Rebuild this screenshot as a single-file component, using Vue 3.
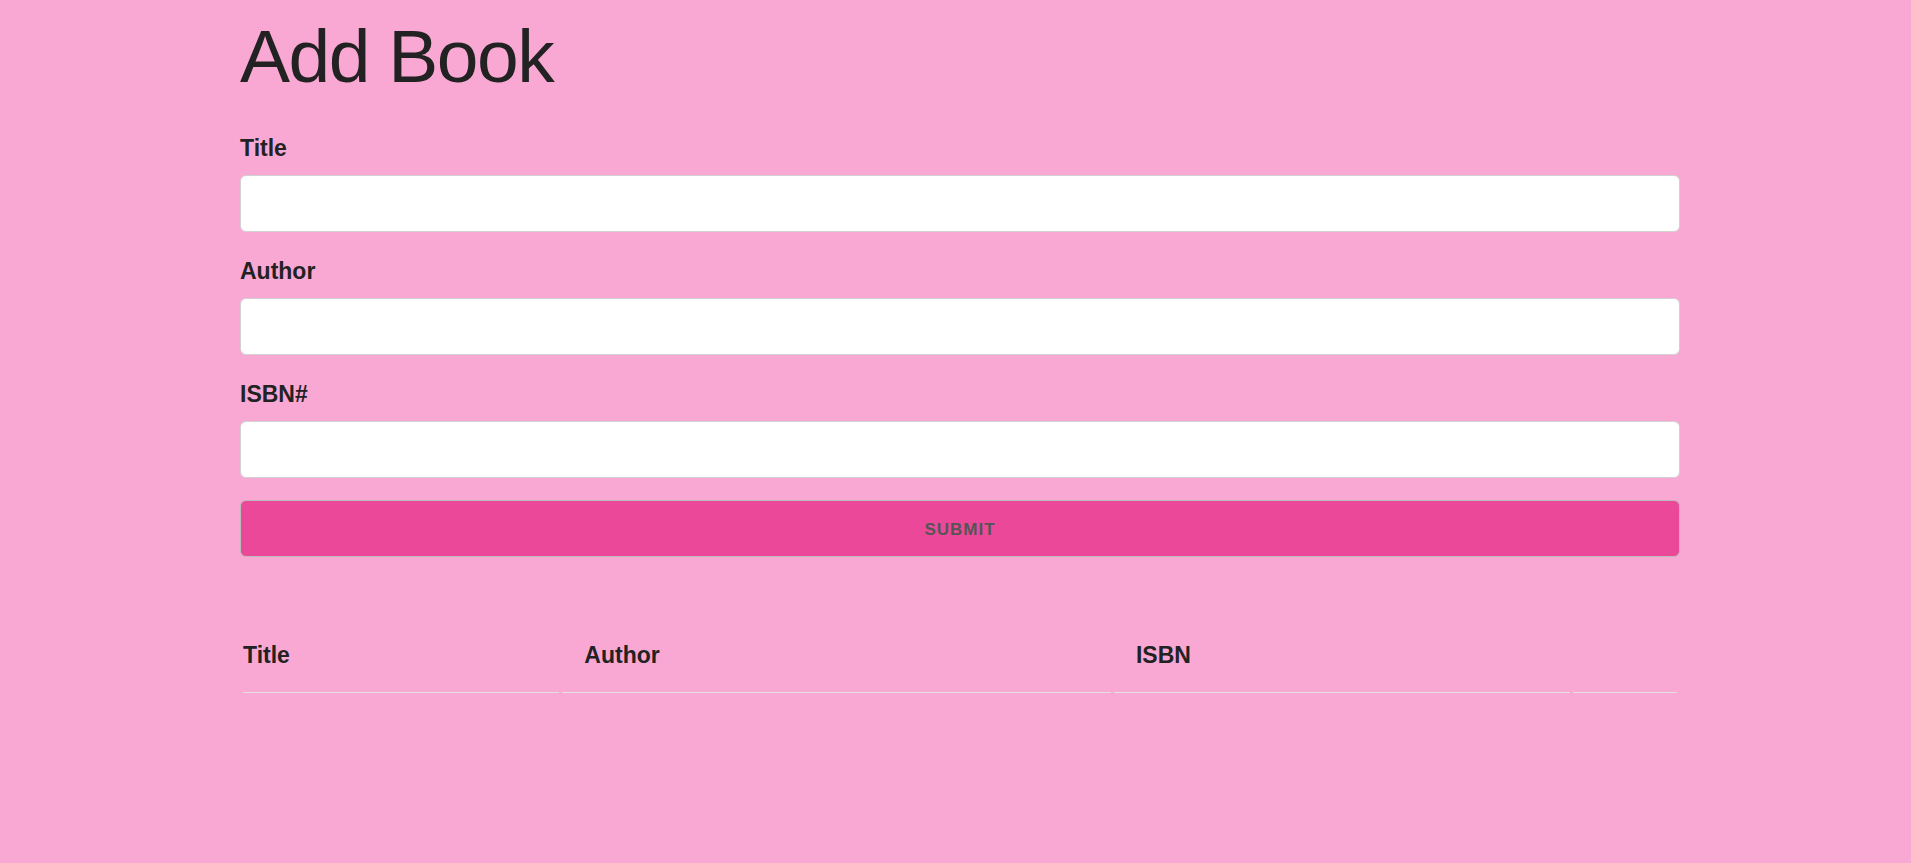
<script setup>
import { reactive, ref } from 'vue'

const fields = [
  { id: 'title', label: 'Title' },
  { id: 'author', label: 'Author' },
  { id: 'isbn', label: 'ISBN#' },
]
const book = reactive({ title: '', author: '', isbn: '' })
const books = ref([])

function addBook() {
  if (!book.title || !book.author || !book.isbn) return
  books.value.push({ ...book })
  book.title = book.author = book.isbn = ''
}

function removeBook(index) {
  books.value.splice(index, 1)
}
</script>

<template>
  <main class="page">
    <div class="container">
      <h1>Add Book</h1>
      <form @submit.prevent="addBook">
        <div v-for="field in fields" :key="field.id" class="field">
          <label :for="field.id">{{ field.label }}</label>
          <input :id="field.id" v-model="book[field.id]" type="text" autocomplete="off" />
        </div>
        <button class="submit" type="submit">Submit</button>
      </form>
      <table>
        <colgroup>
          <col class="col-title" />
          <col class="col-author" />
          <col class="col-isbn" />
          <col />
        </colgroup>
        <thead>
          <tr>
            <th scope="col">Title</th>
            <th scope="col">Author</th>
            <th scope="col">ISBN</th>
            <td></td>
          </tr>
        </thead>
        <tbody>
          <tr v-for="(item, index) in books" :key="index">
            <td>{{ item.title }}</td>
            <td>{{ item.author }}</td>
            <td>{{ item.isbn }}</td>
            <td><button class="remove" type="button" @click="removeBook(index)">X</button></td>
          </tr>
        </tbody>
      </table>
    </div>
  </main>
</template>

<style>
body {
  margin: 0;
  background: #f9a8d4;
}
</style>

<style scoped>
.page {
  padding: 11px 0 30px 9px;
  color: #222;
  font-family: "Liberation Sans", Arial, Helvetica, sans-serif;
  font-size: 23px;
  line-height: 34px;
}

.container {
  box-sizing: border-box;
  width: 80%;
  max-width: 1440px;
  margin: 0 auto;
}

@media (min-width: 1500px) {
  .container {
    width: 100%;
  }
}

h1 {
  margin: 0 0 30px;
  font-size: 75px;
  font-weight: 300;
  line-height: 90px;
  letter-spacing: -0.02em;
}

.field {
  margin-bottom: 22px;
}

label {
  display: block;
  margin-bottom: 10px;
  font-weight: 600;
}

input {
  display: block;
  box-sizing: border-box;
  width: 100%;
  height: 57px;
  padding: 8px 15px;
  border: 1px solid #d1d1d1;
  border-radius: 6px;
  background: #fff;
  color: inherit;
  font: inherit;
}

.submit {
  display: block;
  box-sizing: border-box;
  width: 100%;
  height: 57px;
  margin: 0 0 60px;
  padding: 0 45px;
  border: 1px solid #bbb;
  border-radius: 6px;
  background: #ec4899;
  color: #555;
  font-family: inherit;
  font-size: 17px;
  font-weight: 600;
  line-height: 57px;
  letter-spacing: 1px;
  text-align: center;
  text-transform: uppercase;
  cursor: pointer;
}

table {
  width: 100%;
  table-layout: fixed;
  border-collapse: separate;
  border-spacing: 3px;
}

.col-title {
  width: 22.2%;
}

.col-author {
  width: 38.5%;
}

.col-isbn {
  width: 32%;
}

th,
td {
  padding: 18px 22px 20px;
  border-bottom: 1px solid #e1e1e1;
  text-align: left;
}

th {
  font-weight: 600;
}

th:first-child,
td:first-child {
  padding-left: 0;
}

.remove {
  border: 0;
  background: none;
  color: inherit;
  font: inherit;
  cursor: pointer;
}
</style>
